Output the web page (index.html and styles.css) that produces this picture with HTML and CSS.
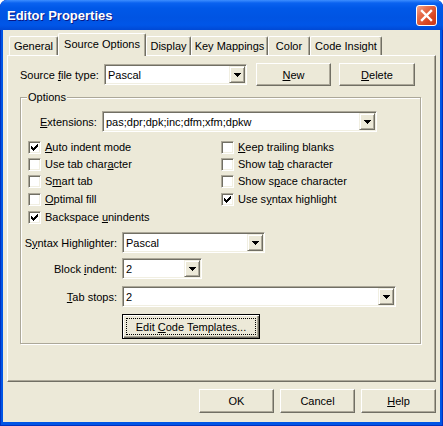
FILE: index.html
```html
<!DOCTYPE html>
<html>
<head>
<meta charset="utf-8">
<title>Editor Properties</title>
<link rel="stylesheet" href="styles.css">
</head>
<body>
<div class="window">
  <div class="titlebar">
    <span class="title">Editor Properties</span>
    <div class="close">
      <svg width="13" height="13" viewBox="0 0 13 13"><path d="M2 2 L11 11 M11 2 L2 11" stroke="#fff" stroke-width="2.4" stroke-linecap="square"/></svg>
    </div>
  </div>
  <div class="client">
    <div class="tabs">
      <div class="tab t1"><span>General</span></div>
      <div class="tab sel t2"><span>Source Options</span></div>
      <div class="tab t3"><span>Display</span></div>
      <div class="tab t4"><span>Key Mappings</span></div>
      <div class="tab t5"><span>Color</span></div>
      <div class="tab t6"><span>Code Insight</span></div>
    </div>
    <div class="panel">
      <div class="row1">
        <span class="lbl lbl-src"><span>Source <u>f</u>ile type:</span></span>
        <div class="combo c-src"><span class="val">Pascal</span><span class="arrow"><svg width="7" height="4" viewBox="0 0 7 4" shape-rendering="crispEdges"><path d="M0 0h7v1H0zM1 1h5v1H1zM2 2h3v1H2zM3 3h1v1H3z" fill="#000"/></svg></span></div>
        <button class="btn b-new"><span><u>N</u>ew</span></button>
        <button class="btn b-del"><span><u>D</u>elete</span></button>
      </div>
      <div class="group">
        <div class="legend">Options</div>
        <div class="ext-row">
          <span class="lbl lbl-ext"><span><u>E</u>xtensions:</span></span>
          <div class="combo c-ext"><span class="val">pas;dpr;dpk;inc;dfm;xfm;dpkw</span><span class="arrow"><svg width="7" height="4" viewBox="0 0 7 4" shape-rendering="crispEdges"><path d="M0 0h7v1H0zM1 1h5v1H1zM2 2h3v1H2zM3 3h1v1H3z" fill="#000"/></svg></span></div>
        </div>
        <div class="checks">
          <div class="chk"><span class="cb"><svg width="7" height="7" viewBox="0 0 7 7" shape-rendering="crispEdges"><path d="M0 2h1v3H0zM1 3h1v3H1zM2 4h1v3H2zM3 3h1v3H3zM4 2h1v3H4zM5 1h1v3H5zM6 0h1v3H6z" fill="#000"/></svg></span><span><u>A</u>uto indent mode</span></div>
          <div class="chk"><span class="cb"></span><span><u>K</u>eep trailing blanks</span></div>
          <div class="chk"><span class="cb"></span><span>Use tab char<u>a</u>cter</span></div>
          <div class="chk"><span class="cb"></span><span>Show ta<u>b</u> character</span></div>
          <div class="chk"><span class="cb"></span><span>S<u>m</u>art tab</span></div>
          <div class="chk"><span class="cb"></span><span>Show s<u>p</u>ace character</span></div>
          <div class="chk"><span class="cb"></span><span><u>O</u>ptimal fill</span></div>
          <div class="chk"><span class="cb"><svg width="7" height="7" viewBox="0 0 7 7" shape-rendering="crispEdges"><path d="M0 2h1v3H0zM1 3h1v3H1zM2 4h1v3H2zM3 3h1v3H3zM4 2h1v3H4zM5 1h1v3H5zM6 0h1v3H6z" fill="#000"/></svg></span><span>Use s<u>y</u>ntax highlight</span></div>
          <div class="chk"><span class="cb"><svg width="7" height="7" viewBox="0 0 7 7" shape-rendering="crispEdges"><path d="M0 2h1v3H0zM1 3h1v3H1zM2 4h1v3H2zM3 3h1v3H3zM4 2h1v3H4zM5 1h1v3H5zM6 0h1v3H6z" fill="#000"/></svg></span><span>Backspace <u>u</u>nindents</span></div>
        </div>
        <div class="form">
          <span class="flbl"><span>S<u>y</u>ntax Highlighter:</span></span>
          <div class="combo c-syn"><span class="val">Pascal</span><span class="arrow"><svg width="7" height="4" viewBox="0 0 7 4" shape-rendering="crispEdges"><path d="M0 0h7v1H0zM1 1h5v1H1zM2 2h3v1H2zM3 3h1v1H3z" fill="#000"/></svg></span></div>
          <span class="flbl r2"><span>Block <u>i</u>ndent:</span></span>
          <div class="combo c-blk r2"><span class="val">2</span><span class="arrow"><svg width="7" height="4" viewBox="0 0 7 4" shape-rendering="crispEdges"><path d="M0 0h7v1H0zM1 1h5v1H1zM2 2h3v1H2zM3 3h1v1H3z" fill="#000"/></svg></span></div>
          <span class="flbl r3"><span><u>T</u>ab stops:</span></span>
          <div class="combo c-tab r3"><span class="val">2</span><span class="arrow"><svg width="7" height="4" viewBox="0 0 7 4" shape-rendering="crispEdges"><path d="M0 0h7v1H0zM1 1h5v1H1zM2 2h3v1H2zM3 3h1v1H3z" fill="#000"/></svg></span></div>
          <span class="flbl r4"></span>
          <button class="btn default r4"><span class="focus"><span>Edit <u>C</u>ode Templates...</span></span></button>
        </div>
      </div>
    </div>
    <div class="footer">
      <button class="btn fbtn"><span>OK</span></button>
      <button class="btn fbtn"><span>Cancel</span></button>
      <button class="btn fbtn"><span><u>H</u>elp</span></button>
    </div>
  </div>
</div>
</body>
</html>
```

FILE: styles.css
```css
html, body {
  margin: 0;
  padding: 0;
  background: #ffffff;
}

body {
  font: 11px "Liberation Sans", Arial, sans-serif;
  color: #000;
}

.window {
  width: 443px;
  height: 426px;
  display: flex;
  flex-direction: column;
  background: #0055e5;
  border-radius: 7px 7px 0 0;
  box-shadow: inset 1px 0 #0031c0, inset -1px 0 #0031c0, inset 0 -1px #0031c0;
  overflow: hidden;
}

.titlebar {
  height: 30px;
  flex: none;
  display: flex;
  align-items: center;
  padding: 0 6px 0 7px;
  border-radius: 7px 7px 0 0;
  background: linear-gradient(to bottom, #3d8eff 0px, #0a62f0 3px, #0058e8 8px, #0054e3 18px, #0056e8 25px, #0049d5 30px);
}

.title {
  color: #fff;
  font: bold 13px "Liberation Sans", Arial, sans-serif;
  text-shadow: 1px 1px #0a1883;
  padding-top: 1px;
}

.close {
  margin-left: auto;
  width: 21px;
  height: 21px;
  box-sizing: border-box;
  border: 1px solid #fff;
  border-radius: 3px;
  background: linear-gradient(135deg, #f3a68f 0%, #e8714f 30%, #d9441f 70%, #c9391a 100%);
  display: flex;
  align-items: center;
  justify-content: center;
  margin-top: 1px;
}

.close svg { display: block; }

.client {
  flex: 1;
  margin: 0 3px 4px;
  background: #ece9d8;
  display: flex;
  flex-direction: column;
  padding: 3px 4px 0;
}

/* tabs */
.tabs {
  height: 22px;
  flex: none;
  display: flex;
  align-items: flex-end;
  padding-left: 2px;
  z-index: 1;
}

.tab {
  height: 19px;
  box-sizing: border-box;
  border-top: 1px solid #fff;
  border-left: 1px solid #fff;
  border-right: 1px solid #716f64;
  box-shadow: inset -1px 0 #aca899;
  border-radius: 2px 2px 0 0;
  display: flex;
  align-items: center;
  justify-content: center;
  background: #ece9d8;
  white-space: nowrap;
}

.tab.sel {
  height: 23px;
  margin-bottom: -1px;
  padding-bottom: 2px;
}

.t1 { width: 49px; }
.t2 { width: 88px; }
.t3 { width: 45px; }
.t4 { width: 77px; }
.t5 { width: 42px; }
.t6 { width: 72px; }

/* panel */
.panel {
  height: 327px;
  flex: none;
  box-sizing: border-box;
  border: 1px solid;
  border-color: #fff #716f64 #716f64 #fff;
  box-shadow: inset -1px -1px #aca899;
  padding: 7px 0 0 12px;
}

.row1 {
  display: flex;
  align-items: flex-start;
  height: 23px;
}

.lbl {
  display: flex;
  align-items: center;
  white-space: nowrap;
}

.lbl-src {
  width: 84px;
  height: 23px;
}

/* combo */
.combo {
  box-sizing: border-box;
  height: 21px;
  display: flex;
  align-items: stretch;
  background: #fff;
  border: 1px solid;
  border-color: #aca899 #fff #fff #aca899;
  box-shadow: inset 1px 1px #716f64, inset -1px -1px #f1efe2;
  padding: 1px;
}

.combo .val {
  flex: 1;
  padding-left: 2px;
  display: flex;
  align-items: center;
  white-space: nowrap;
  overflow: hidden;
}

.combo .arrow {
  width: 16px;
  flex: none;
  box-sizing: border-box;
  background: #ece9d8;
  border: 1px solid;
  border-color: #f1efe2 #716f64 #716f64 #f1efe2;
  box-shadow: inset 1px 1px #fff, inset -1px -1px #aca899;
  display: flex;
  align-items: center;
  justify-content: center;
}

.combo .arrow svg { display: block; }

.c-src { width: 143px; margin-top: 1px; }
.c-ext { width: 275px; }
.c-syn { width: 143px; }
.c-blk { width: 80px; }
.c-tab { width: 274px; }

/* buttons */
.btn {
  box-sizing: border-box;
  height: 23px;
  border: 1px solid;
  border-color: #fff #716f64 #716f64 #fff;
  box-shadow: inset -1px -1px #aca899;
  background: #ece9d8;
  font: inherit;
  color: #000;
  padding: 0;
  margin: 0;
  display: flex;
  align-items: center;
  justify-content: center;
  white-space: nowrap;
}

.b-new { width: 75px; margin-left: 9px; }
.b-del { width: 76px; margin-left: 8px; }

.btn.default {
  width: 138px;
  height: 25px;
  border: 1px solid #000;
  box-shadow: inset 1px 1px #fff, inset -1px -1px #716f64, inset -2px -2px #aca899;
  align-items: stretch;
  justify-content: stretch;
}

.btn.default .focus {
  flex: 1;
  margin: 3px;
  border: 1px dotted #000;
  display: flex;
  align-items: center;
  justify-content: center;
  white-space: nowrap;
}

/* group */
.group {
  width: 401px;
  height: 247px;
  box-sizing: border-box;
  margin-top: 11px;
  border: 1px solid #aca899;
  box-shadow: inset 1px 1px #fff, 1px 1px #fff;
}

.legend {
  width: fit-content;
  margin: -7px 0 0 6px;
  padding: 0 1px;
  line-height: 13px;
  height: 13px;
  background: #ece9d8;
}

.ext-row {
  display: flex;
  margin: 7px 0 0 19px;
}

.lbl-ext {
  width: 62px;
  height: 21px;
}

.checks {
  display: grid;
  grid-template-columns: 193px 1fr;
  grid-template-rows: 17px 17px 18px 18px 17px;
  margin: 9px 0 0 7px;
}

.chk {
  display: flex;
  align-items: flex-start;
  gap: 4px;
  line-height: 13px;
  white-space: nowrap;
}

.cb {
  width: 13px;
  height: 13px;
  flex: none;
  box-sizing: border-box;
  border: 1px solid;
  border-color: #aca899 #fff #fff #aca899;
  box-shadow: inset 1px 1px #716f64, inset -1px -1px #f1efe2;
  background: #fff;
  display: flex;
  align-items: center;
  justify-content: center;
}

.cb svg { display: block; }

.form {
  display: grid;
  grid-template-columns: 89px auto;
  column-gap: 5px;
  justify-items: start;
  margin: 4px 0 0 7px;
}

.flbl {
  justify-self: end;
  height: 21px;
  display: flex;
  align-items: center;
  white-space: nowrap;
}

.form .r2 { margin-top: 5px; }
.form .r3 { margin-top: 7px; }
.form .r4 { margin-top: 7px; }

/* footer */
.footer {
  display: flex;
  justify-content: flex-end;
  gap: 6px;
  margin-top: 7px;
}

.fbtn {
  width: 75px;
  height: 24px;
}
```
